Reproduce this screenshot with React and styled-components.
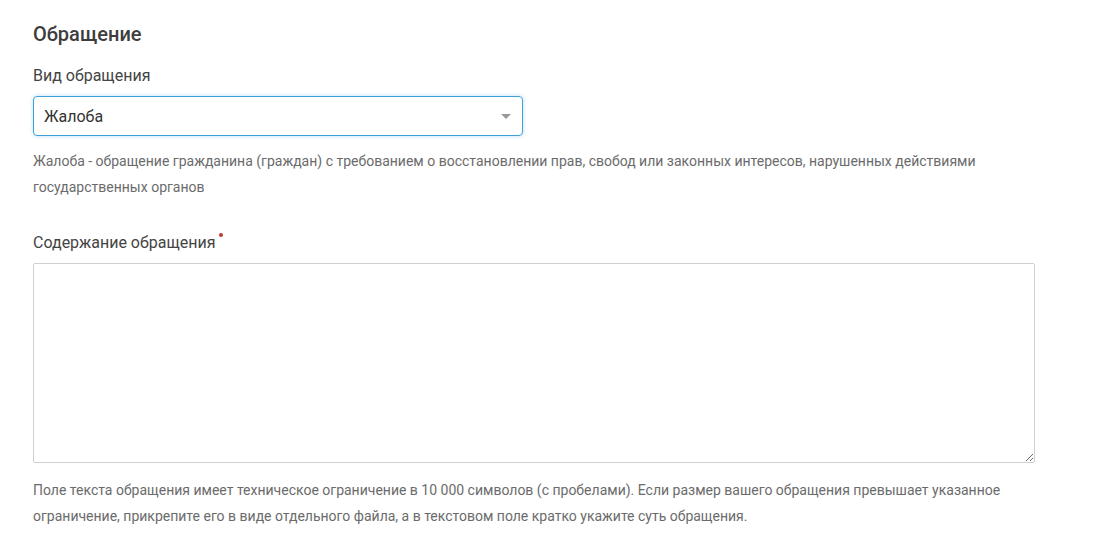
import React from 'react'
import styled, { createGlobalStyle } from 'styled-components'

const GlobalStyle = createGlobalStyle`
  body {
    margin: 0;
    background: #fff;
    font-family: Roboto, "Noto Sans", sans-serif;
  }
`

const Page = styled.div`
  padding: 22px 33px 0 33px;
  width: 1002px;
`

const Title = styled.h2`
  margin: 0 0 20px;
  font-size: 20px;
  font-weight: 500;
  line-height: 24px;
  color: #3d3d3d;
`

const Label = styled.div`
  font-size: 16px;
  line-height: 20px;
  color: #444;
  margin-bottom: 10px;
  position: relative;
  display: inline-block;
`

const Required = styled.span`
  position: absolute;
  top: 0px;
  right: -8px;
  width: 4px;
  height: 4px;
  border-radius: 50%;
  background: #c0392b;
`

const Field = styled.div`
  display: flex;
  flex-direction: column;
  align-items: flex-start;
  margin-top: ${p => p.top || 0}px;
`

const SelectBox = styled.div`
  box-sizing: border-box;
  width: 490px;
  height: 40px;
  border: 1px solid #3f9fd6;
  border-radius: 4px;
  box-shadow: 0 0 4px rgba(63, 159, 214, 0.35);
  display: flex;
  align-items: center;
  justify-content: space-between;
  padding: 0 11px 0 10px;
  font-size: 16px;
  color: #333;
`

const Caret = styled.span`
  width: 0;
  height: 0;
  border-left: 5px solid transparent;
  border-right: 5px solid transparent;
  border-top: 5px solid #999;
`

const Hint = styled.p`
  margin: ${p => p.top || 0}px 0 0;
  font-size: 14px;
  line-height: 26px;
  color: #6b6b6b;
`

const TextArea = styled.textarea`
  box-sizing: border-box;
  width: 1002px;
  height: 200px;
  border: 1px solid #d0d0d0;
  border-radius: 2px;
  resize: vertical;
  font-family: inherit;
  font-size: 14px;
  outline: none;
`

const App = () => (
  <>
    <GlobalStyle />
    <Page>
      <Title>Обращение</Title>
      <Field>
        <Label>Вид обращения</Label>
        <SelectBox>
          Жалоба
          <Caret />
        </SelectBox>
      </Field>
      <Hint top={12}>
        Жалоба - обращение гражданина (граждан) с требованием о восстановлении прав, свобод или законных интересов, нарушенных действиями государственных органов
      </Hint>
      <Field top={33}>
        <Label>
          Содержание обращения
          <Required />
        </Label>
        <TextArea />
      </Field>
      <Hint top={14}>
        Поле текста обращения имеет техническое ограничение в 10 000 символов (с пробелами). Если размер вашего обращения превышает указанное ограничение, прикрепите его в виде отдельного файла, а в текстовом поле кратко укажите суть обращения.
      </Hint>
    </Page>
  </>
)

export default App
